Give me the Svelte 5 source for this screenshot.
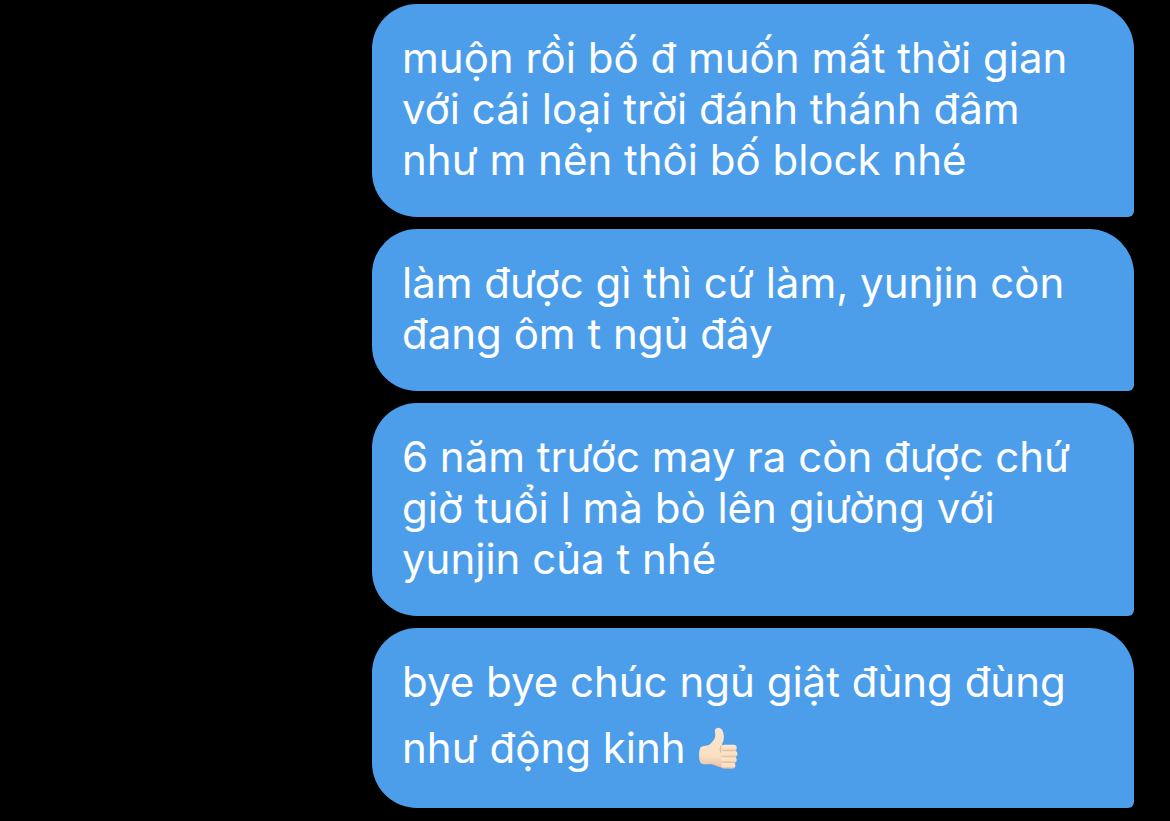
<script lang="ts">
  interface Message {
    lines: string[];
    thumb?: boolean;
  }

  const messages: Message[] = [
    {
      lines: [
        'muộn rồi bố đ muốn mất thời gian',
        'với cái loại trời đánh thánh đâm',
        'như m nên thôi bố block nhé',
      ],
    },
    { lines: ['làm được gì thì cứ làm, yunjin còn', 'đang ôm t ngủ đây'] },
    {
      lines: [
        '6 năm trước may ra còn được chứ',
        'giờ tuổi l mà bò lên giường với',
        'yunjin của t nhé',
      ],
    },
    { lines: ['bye bye chúc ngủ giật đùng đùng', 'như động kinh'], thumb: true },
  ];
</script>

<main class="thread">
  {#each messages as message}
    <p class="bubble">
      {#each message.lines as line, i}
        {@const hasThumb = message.thumb && i === message.lines.length - 1}
        <span class="line" class:tall={hasThumb}>
          {line}
          {#if hasThumb}
            <svg class="thumb" viewBox="54 36 120 126" role="img" aria-label="thumbs up">
              <defs>
                <linearGradient id="skin" x1="0" y1="0" x2="0" y2="1">
                  <stop offset="0" stop-color="#fbe6cd" />
                  <stop offset="0.7" stop-color="#f9e0c5" />
                  <stop offset="1" stop-color="#e9c09d" />
                </linearGradient>
                <linearGradient id="finger" x1="0" y1="0" x2="0" y2="1">
                  <stop offset="0" stop-color="#fde9d2" />
                  <stop offset="0.65" stop-color="#f9dfc4" />
                  <stop offset="1" stop-color="#dfb18c" />
                </linearGradient>
              </defs>
              <path
                d="M62 97 C70 91 83 94 91 87 C100 78 107 70 106 59 C105 51 103 45 107 41 C113 36 123 38 127 46 C132 57 133 68 130 77 C128 83 126 87 126 91 L150 93 L150 157 C139 160 128 159 119 156 C108 153 101 149 91 147 C79 147 68 150 62 144 C56 135 55 108 62 97 Z"
                fill="url(#skin)"
              />
              <path d="M125 91 C119 99 119 107 124 114" fill="none" stroke="#d8ad8b" stroke-width="3" />
              <rect x="124" y="142" width="42" height="19" rx="9" fill="url(#finger)" />
              <rect x="124" y="125" width="46" height="19" rx="9" fill="url(#finger)" />
              <rect x="123" y="107" width="49" height="20" rx="9" fill="url(#finger)" />
              <rect x="123" y="89" width="47" height="20" rx="9" fill="url(#finger)" />
            </svg>
          {/if}
        </span>
      {/each}
    </p>
  {/each}
</main>

<style>
  :global(body) {
    background: #000;
  }

  .thread {
    display: flex;
    flex-direction: column;
    align-items: flex-end;
    gap: 12px;
    padding: 4px 36px 12px;
  }

  .bubble {
    box-sizing: border-box;
    width: 762px;
    max-width: 100%;
    margin: 0;
    padding: 28px 30px 32px;
    border-radius: 45px 45px 6px 45px;
    background: #4c9eeb;
    color: #fff;
    font-family: Inter, 'Noto Sans', sans-serif;
    font-size: 42px;
    line-height: 51px;
  }

  .line {
    display: block;
  }

  .tall {
    display: flex;
    align-items: center;
    gap: 12px;
    box-sizing: border-box;
    height: 69px;
    padding-top: 12px;
  }

  .thumb {
    width: 40px;
    height: 42px;
  }
</style>
